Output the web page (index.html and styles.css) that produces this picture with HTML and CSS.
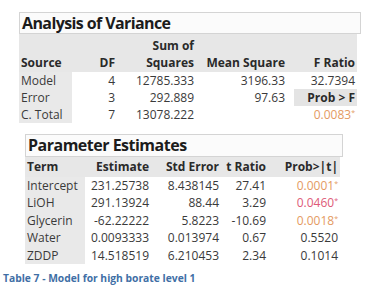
FILE: index.html
```html
<!DOCTYPE html>
<html>
<head>
<meta charset="utf-8">
<link rel="stylesheet" href="styles.css">
</head>
<body>
<div class="page">
  <section class="anova">
    <div class="title">Analysis of Variance</div>
    <div class="grid anova-grid">
      <div class="hd top c1"></div><div class="hd top"></div><div class="hd top">Sum of</div><div class="hd top"></div><div class="hd top"></div>
      <div class="hd c1">Source</div><div class="hd">DF</div><div class="hd">Squares</div><div class="hd">Mean Square</div><div class="hd">F Ratio</div>
      <div class="lab">Model</div><div>4</div><div>12785.333</div><div>3196.33</div><div>32.7394</div>
      <div class="lab">Error</div><div>3</div><div>292.889</div><div>97.63</div><div class="probf">Prob &gt; F</div>
      <div class="lab">C. Total</div><div>7</div><div>13078.222</div><div></div><div class="sig-o">0.0083<sup>*</sup></div>
    </div>
  </section>
  <section class="params">
    <div class="title">Parameter Estimates</div>
    <div class="grid param-grid">
      <div class="hd c1">Term</div><div class="hd">Estimate</div><div class="hd">Std Error</div><div class="hd">t Ratio</div><div class="hd">Prob&gt;|t|</div>
      <div class="lab">Intercept</div><div>231.25738</div><div>8.438145</div><div>27.41</div><div class="sig-o">0.0001<sup>*</sup></div>
      <div class="lab">LiOH</div><div>291.13924</div><div>88.44</div><div>3.29</div><div class="sig-r">0.0460<sup>*</sup></div>
      <div class="lab">Glycerin</div><div>-62.22222</div><div>5.8223</div><div>-10.69</div><div class="sig-o">0.0018<sup>*</sup></div>
      <div class="lab">Water</div><div>0.0093333</div><div>0.013974</div><div>0.67</div><div>0.5520</div>
      <div class="lab">ZDDP</div><div>14.518519</div><div>6.210453</div><div>2.34</div><div>0.1014</div>
    </div>
  </section>
  <div class="caption">Table 7 - Model for high borate level 1</div>
</div>
</body>
</html>
```
FILE: styles.css
```css
html, body {
  margin: 0;
  padding: 0;
  background: #ffffff;
}
.page {
  width: 371px;
  height: 287px;
  font-family: "Open Sans", "DejaVu Sans", sans-serif;
  color: #3a3a3a;
  padding-top: 12px;
  box-sizing: border-box;
}
.title {
  font-weight: 700;
  color: #1c1c1c;
  border: 1px solid #d4d4d4;
  background: #fbfbfb;
  box-sizing: border-box;
  white-space: nowrap;
}
.grid {
  display: grid;
  font-size: 12px;
  line-height: 17px;
  white-space: nowrap;
}
.grid > div {
  text-align: right;
  padding-right: 2px;
}
.grid > .lab, .grid > .c1 {
  text-align: left;
  padding-left: 2px;
}
.hd {
  background: #e7e7e7;
  font-weight: 700;
  color: #2a2a2a;
}
.lab {
  background: #e9e9e9;
}
.anova {
  margin-left: 19px;
  width: 342px;
}
.anova .title {
  height: 22px;
  font-size: 16px;
  line-height: 20px;
  padding-left: 2px;
  letter-spacing: -0.6px;
}
.anova-grid {
  grid-template-columns: 53px 45px 79px 91px 70px;
  width: 338px;
  grid-template-rows: 20px 18px 17px 17px 17px;
}
.anova-grid .hd.top {
  line-height: 16px;
  padding-top: 4px;
}
.anova-grid .hd {
  line-height: 18px;
}
.probf {
  background: #e4e4e4;
  font-weight: 700;
  color: #2a2a2a;
  margin-left: 7px;
}
.sig-o { color: #e49a62; }
.sig-r { color: #de5a78; }
sup {
  font-size: 7px;
  line-height: 0;
  vertical-align: 4px;
}
.params {
  margin-left: 25px;
  margin-top: 11px;
  width: 318px;
}
.params .title {
  height: 23px;
  font-size: 16px;
  line-height: 21px;
  padding-left: 2px;
  letter-spacing: -0.5px;
}
.param-grid {
  grid-template-columns: 60px 66px 70px 47px 72px;
  width: 315px;
  grid-template-rows: 20px repeat(5, 17.4px);
}
.param-grid .hd {
  line-height: 20px;
}
.caption {
  margin-top: 7px;
  margin-left: 3px;
  font-size: 10.3px;
  line-height: 15px;
  font-weight: 700;
  color: #3f6fa6;
}
```
